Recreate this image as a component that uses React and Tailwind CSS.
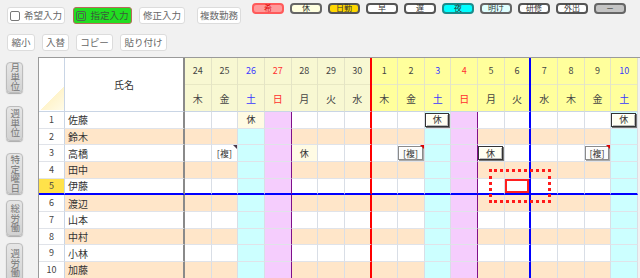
import React from "react";

const FONT = "font-['Noto_Sans_CJK_JP','Noto_Sans',sans-serif]";

const DAYS = [
  { d: 24, w: "木", m: 0 },
  { d: 25, w: "金", m: 0 },
  { d: 26, w: "土", m: 0 },
  { d: 27, w: "日", m: 0 },
  { d: 28, w: "月", m: 0 },
  { d: 29, w: "火", m: 0 },
  { d: 30, w: "水", m: 0 },
  { d: 1, w: "木", m: 1 },
  { d: 2, w: "金", m: 1 },
  { d: 3, w: "土", m: 1 },
  { d: 4, w: "日", m: 1 },
  { d: 5, w: "月", m: 1 },
  { d: 6, w: "火", m: 1 },
  { d: 7, w: "水", m: 1 },
  { d: 8, w: "木", m: 1 },
  { d: 9, w: "金", m: 1 },
  { d: 10, w: "土", m: 1 },
];

const NAMES = ["佐藤", "鈴木", "高橋", "田中", "伊藤", "渡辺", "山本", "中村", "小林", "加藤"];

// row-col -> cell content
const CELLS = {
  "0-2": { kind: "plain", text: "休" },
  "0-9": { kind: "box", text: "休" },
  "0-16": { kind: "box", text: "休" },
  "2-1": { kind: "plain", text: "[複]", mark: "dark" },
  "2-4": { kind: "plain", text: "休" },
  "2-8": { kind: "multi", text: "[複]" },
  "2-11": { kind: "box", text: "休" },
  "2-15": { kind: "multi", text: "[複]" },
};

const PILLS = [
  { label: "希", cls: "bg-[#ff9a9a] border-[#ff5a5a] text-[#e01010]" },
  { label: "休", cls: "bg-[#ffffe0] border-[#666] text-[#333]" },
  { label: "日勤", cls: "bg-[#ffd700] border-[#555] text-[#333]" },
  { label: "早", cls: "bg-white border-[#555] text-[#333]" },
  { label: "遅", cls: "bg-white border-[#555] text-[#333]" },
  { label: "夜", cls: "bg-[#00ffff] border-[#1a8c8c] text-[#333]" },
  { label: "明け", cls: "bg-[#e0ffff] border-[#666] text-[#333]" },
  { label: "研修", cls: "bg-white border-[#555] text-[#333]" },
  { label: "外出", cls: "bg-white border-[#555] text-[#333]" },
  { label: "－", cls: "bg-[#c4c4c4] border-[#666] text-[#333]" },
];

const SIDE = [
  { label: "月単位", cls: "mt-[5px] h-[31px]" },
  { label: "週単位", cls: "mt-[13px] h-[35px]" },
  { label: "特定曜日", cls: "mt-[12px] h-[41px]" },
  { label: "総労働", cls: "mt-[6px] h-[36px]" },
  { label: "週労働", cls: "mt-[7px] h-[40px]" },
];

function dayColor(w) {
  if (w === "土") return "text-[#3a3aff]";
  if (w === "日") return "text-[#ff3030]";
  return "text-[#444]";
}

function rightBorder(i, header) {
  if (i === 6) return "border-r-2 border-r-[#ff0000]";
  if (i === 12) return "border-r-2 border-r-[#0000ff]";
  if (!header && (i === 3 || i === 10)) return "border-r border-r-[#80108a]";
  return header ? "border-r border-r-[#e4e4c6]" : "border-r border-r-[#d9dee6]";
}

function cellBg(row, i, day, cell) {
  if (cell && cell.kind === "plain" && cell.text === "休") return "bg-[#fffbe4]";
  if (day.w === "土") return "bg-[#ccffff]";
  if (day.w === "日") return "bg-[#f5cdfd]";
  return row % 2 === 1 ? "bg-[#ffe6c9]" : "bg-white";
}

function ToolButton({ className, children }) {
  return (
    <div
      className={`flex h-[17px] items-center justify-center rounded-[3px] border text-[9.5px] leading-none ${className}`}
    >
      {children}
    </div>
  );
}

function CellContent({ cell }) {
  if (!cell) return null;
  if (cell.kind === "plain") {
    return (
      <div className="relative flex h-full w-full items-center justify-center text-[9px] leading-none text-[#333]">
        {cell.text}
        {cell.mark && (
          <span className="absolute right-0 top-0 h-0 w-0 border-l-[4px] border-t-[4px] border-l-transparent border-t-[#4a3a4a]" />
        )}
      </div>
    );
  }
  if (cell.kind === "box") {
    return (
      <div className="flex h-full w-full py-[1px] pr-[1px]">
        <div className="flex flex-1 items-center justify-center border border-[#333] bg-[#fffff2] text-[9px] leading-none text-[#333] shadow-[inset_1px_1px_0_#fff,inset_-1px_-1px_0_#bbb,1px_1px_0_#777]">
          {cell.text}
        </div>
      </div>
    );
  }
  return (
    <div className="relative flex h-full w-full py-[1px] pr-[1px]">
      <div className="flex flex-1 items-center justify-center border border-[#8a8a8a] bg-[#fbfbfb] text-[9px] leading-none text-[#333] shadow-[inset_1px_1px_0_#fff,1px_1px_0_#aaa]">
        {cell.text}
      </div>
      <span className="absolute right-0 top-0 h-0 w-0 border-l-[4px] border-t-[4px] border-l-transparent border-t-[#e00000]" />
    </div>
  );
}

export default function App() {
  return (
    <div className={`relative h-[278px] w-[640px] overflow-hidden bg-[#f1f1f1] ${FONT}`}>
      {/* toolbar row 1 */}
      <div className="flex h-[24px]">
        <div className="flex items-start pl-[7px] pt-[7px] text-[#666]">
          <ToolButton className="w-[58px] gap-[4px] border-[#dcdcdc] bg-white">
            <span className="h-[10px] w-[10px] rounded-[2px] border-[1.5px] border-[#777]" />
            希望入力
          </ToolButton>
          <ToolButton className="ml-[8px] w-[59px] gap-[4px] border-[#b86a5a] bg-[#22dd22] text-[#3a5a3a]">
            <span className="flex h-[10px] w-[10px] items-center justify-center rounded-[2px] border border-[#4a6a4a]">
              <span className="h-[6px] w-[6px] rounded-[1px] border border-[#4a6a4a]" />
            </span>
            指定入力
          </ToolButton>
          <ToolButton className="ml-[7px] w-[46px] border-[#dcdcdc] bg-white">修正入力</ToolButton>
          <ToolButton className="ml-[12px] w-[44px] border-[#dcdcdc] bg-white">複数勤務</ToolButton>
        </div>
        <div className="ml-[11px] flex gap-[6px] pt-[3px]">
          {PILLS.map((p) => (
            <div
              key={p.label}
              className={`flex h-[10.5px] w-[32px] items-center justify-center rounded-[4px] border-2 text-[8px] leading-none ${p.cls}`}
            >
              {p.label}
            </div>
          ))}
        </div>
      </div>

      {/* toolbar row 2 */}
      <div className="mt-[10px] flex gap-[7px] pl-[7px] text-[#666]">
        <ToolButton className="w-[28px] border-[#dcdcdc] bg-white">縮小</ToolButton>
        <ToolButton className="w-[27px] border-[#dcdcdc] bg-white">入替</ToolButton>
        <ToolButton className="w-[37px] border-[#dcdcdc] bg-white">コピー</ToolButton>
        <ToolButton className="w-[47px] border-[#dcdcdc] bg-white">貼り付け</ToolButton>
      </div>

      {/* main */}
      <div className="mt-[6px] flex">
        <div className="flex w-[38px] flex-col pl-[6px]">
          {SIDE.map((s) => (
            <div
              key={s.label}
              className={`flex w-[17px] shrink-0 items-center justify-center rounded-[4px] border border-[#bcbcbc] bg-[linear-gradient(#e6e6e6,#d2d2d2)] shadow-[0_1px_1px_#aaa] ${s.cls}`}
            >
              <span className="whitespace-nowrap text-[9.5px] leading-none text-[#777] [writing-mode:vertical-rl]">
                {s.label}
              </span>
            </div>
          ))}
        </div>

        <div className="w-[604px] overflow-hidden border-l border-t border-[#9a9a9a]">
          {/* header */}
          <div className="flex h-[54px] w-[700px]">
            <div className="relative w-[26px] border-b border-r border-[#c9d5e5] bg-white">
              <div className="absolute bottom-[1px] left-[1px] right-0 h-[23px] bg-[linear-gradient(to_bottom_right,transparent_50%,#fff4cc_50%,#fffbe8)]" />
            </div>
            <div className="flex w-[120px] items-center justify-center border-b border-r-2 border-b-[#c9d5e5] border-r-[#8a8a8a] bg-white text-[10px] text-[#333]">
              氏名
            </div>
            {DAYS.map((day, i) => (
              <div
                key={i}
                className={`flex w-[26.67px] shrink-0 flex-col border-b border-b-[#c9d5e5] ${rightBorder(i, true)} ${
                  day.m === 0 ? "bg-[#f8f8d2]" : "bg-[#ffff9c]"
                }`}
              >
                <div
                  className={`flex h-[27px] items-center justify-center border-b border-b-[#e8e8c4] text-[9px] ${dayColor(day.w)}`}
                >
                  {day.d}
                </div>
                <div className={`flex flex-1 items-center justify-center text-[10px] ${dayColor(day.w)}`}>
                  {day.w}
                </div>
              </div>
            ))}
          </div>

          {/* body */}
          {NAMES.map((name, r) => {
            const bottom =
              r === 4 ? "border-b-2 border-b-[#0000ff]" : "border-b border-b-[#e0e3e9]";
            return (
              <div key={r} className="flex h-[16.67px] w-[700px]">
                <div
                  className={`flex w-[26px] items-center justify-center border-r border-r-[#c9d5e5] text-[9px] text-[#444] ${bottom} ${
                    r === 4 ? "bg-[#ffe24a]" : "bg-white"
                  }`}
                >
                  {r + 1}
                </div>
                <div
                  className={`flex w-[120px] items-center border-r-2 border-r-[#8a8a8a] pl-[3px] text-[10px] text-[#333] ${bottom} ${
                    r % 2 === 1 ? "bg-[#ffe6c9]" : "bg-white"
                  }`}
                >
                  {name}
                </div>
                {DAYS.map((day, i) => {
                  const cell = CELLS[`${r}-${i}`];
                  const selected = r === 4 && i === 12;
                  return (
                    <div
                      key={i}
                      className={`w-[26.67px] shrink-0 ${bottom} ${rightBorder(i, false)} ${cellBg(r, i, day, cell)} ${
                        selected ? "shadow-[inset_0_0_0_2px_#ff2020]" : ""
                      }`}
                    >
                      <CellContent cell={cell} />
                    </div>
                  );
                })}
              </div>
            );
          })}
        </div>
      </div>

      {/* drag selection outline */}
      <div className="absolute left-[489px] top-[169px] h-[34px] w-[62px] border-[3px] border-dotted border-[#ff1a1a]" />
    </div>
  );
}
